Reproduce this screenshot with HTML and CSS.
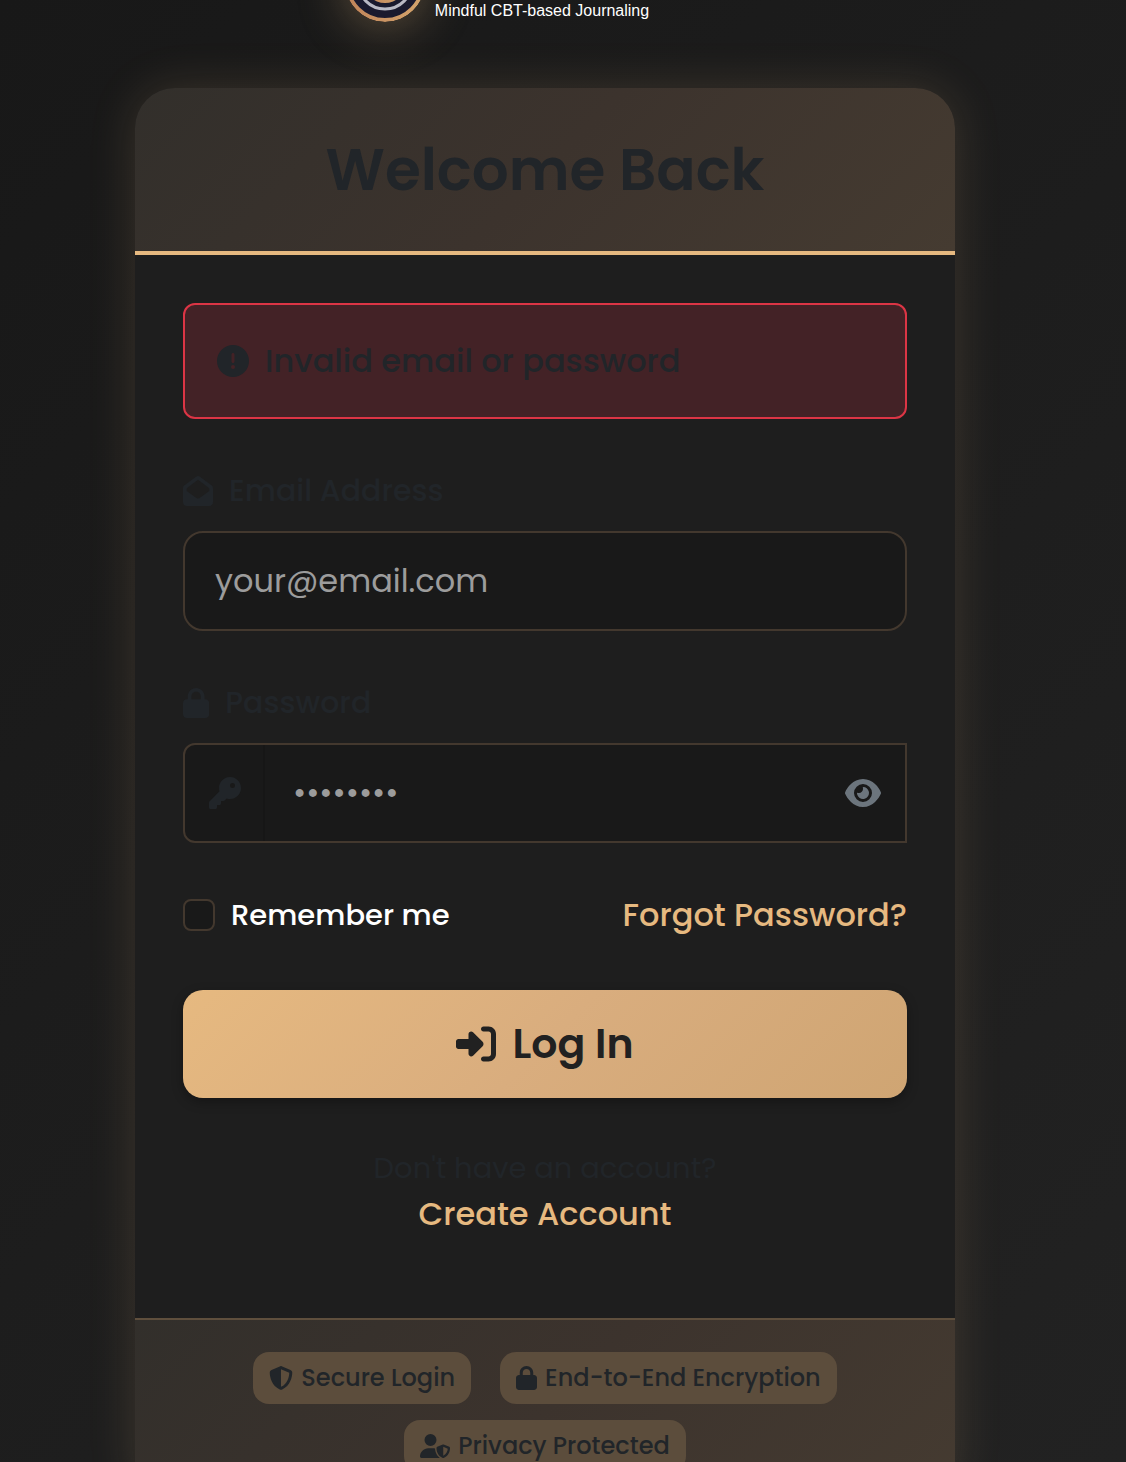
FILE: index.html
```html
<!DOCTYPE html>
<html lang="en">
<head>
<meta charset="utf-8">
<meta name="viewport" content="width=device-width, initial-scale=1">
<title>Log In</title>
<link rel="stylesheet" href="styles.css">
</head>
<body>
<div class="page">
  <header class="brand">
    <svg class="brand-mark" viewBox="0 0 80 80" aria-hidden="true">
      <defs>
        <linearGradient id="copper" x1="0" y1="0" x2="1" y2="0">
          <stop offset="0" stop-color="#c0845a"/>
          <stop offset="1" stop-color="#d4a46c"/>
        </linearGradient>
      </defs>
      <circle cx="40" cy="40" r="38" fill="#1a1a2e" stroke="url(#copper)" stroke-width="4"/>
      <circle cx="40" cy="40" r="27" fill="none" stroke="#b9b9c4" stroke-width="3"/>
      <circle cx="40" cy="40" r="21" fill="url(#copper)"/>
    </svg>
    <p class="brand-tagline">Mindful CBT-based Journaling</p>
  </header>

  <main class="card">
    <div class="card-header">
      <h1 class="card-title">Welcome Back</h1>
    </div>

    <form class="card-body">
      <div class="alert" role="alert">
        <svg class="icon icon-md" viewBox="0 0 512 512" aria-hidden="true"><path d="M256 512A256 256 0 1 0 256 0a256 256 0 1 0 0 512zm0-384c13.300 0 24 10.700 24 24V264c0 13.300-10.700 24-24 24s-24-10.700-24-24V152c0-13.300 10.700-24 24-24zM224 352a32 32 0 1 1 64 0 32 32 0 1 1 -64 0z"/></svg>
        <span>Invalid email or password</span>
      </div>

      <div class="field">
        <label class="field-label" for="email">
          <svg class="icon icon-label" viewBox="0 0 512 512" aria-hidden="true"><path d="M64 208.100L256 65.900 448 208.100v47.400L289.500 373c-9.700 7.200-21.400 11-33.500 11s-23.800-3.900-33.500-11L64 255.500V208.100zM256 0c-12.100 0-23.800 3.900-33.500 11L25.900 156.700C9.600 168.800 0 187.800 0 208.100V448c0 35.300 28.700 64 64 64H448c35.300 0 64-28.700 64-64V208.100c0-20.300-9.600-39.400-25.900-51.400L289.500 11C279.800 3.900 268.100 0 256 0z"/></svg>
          Email Address
        </label>
        <input class="text-input" id="email" type="email" placeholder="your@email.com">
      </div>

      <div class="field">
        <label class="field-label" for="password">
          <svg class="icon icon-label" viewBox="0 0 448 512" aria-hidden="true"><path d="M144 144v48H304V144c0-44.200-35.800-80-80-80s-80 35.800-80 80zM80 192V144C80 64.500 144.500 0 224 0s144 64.500 144 144v48h16c35.300 0 64 28.700 64 64V448c0 35.300-28.700 64-64 64H64c-35.300 0-64-28.700-64-64V256c0-35.300 28.700-64 64-64H80z"/></svg>
          Password
        </label>
        <div class="input-group">
          <span class="input-addon">
            <svg class="icon icon-md" viewBox="0 0 512 512" aria-hidden="true"><path d="M336 352c97.200 0 176-78.800 176-176S433.200 0 336 0S160 78.800 160 176c0 18.700 2.900 36.800 8.300 53.700L7 391c-4.500 4.500-7 10.600-7 17v80c0 13.300 10.700 24 24 24h80c13.300 0 24-10.700 24-24V448h40c13.300 0 24-10.700 24-24V384h40c6.400 0 12.500-2.500 17-7l33.300-33.300c16.900 5.400 35 8.300 53.700 8.300zM376 96a40 40 0 1 1 0 80 40 40 0 1 1 0-80z"/></svg>
          </span>
          <input class="group-input" id="password" type="password" placeholder="••••••••">
          <button class="reveal" type="button" aria-label="Show password">
            <svg class="icon icon-md" viewBox="0 0 576 512" aria-hidden="true"><path d="M288 32c-80.800 0-145.500 36.800-192.600 80.600C48.600 156 17.300 208 2.500 243.700c-3.300 7.900-3.300 16.700 0 24.600C17.300 304 48.600 356 95.400 399.400C142.500 443.200 207.200 480 288 480s145.500-36.800 192.600-80.600c46.800-43.500 78.100-95.400 93-131.100c3.300-7.900 3.300-16.700 0-24.600c-14.900-35.700-46.200-87.700-93-131.100C433.500 68.800 368.800 32 288 32zM144 256a144 144 0 1 1 288 0 144 144 0 1 1 -288 0zm144-64c0 35.300-28.700 64-64 64c-7.100 0-13.900-1.200-20.300-3.300c-5.500-1.800-11.900 1.600-11.700 7.400c.3 6.900 1.300 13.800 3.200 20.700c13.700 51.200 66.400 81.600 117.600 67.900s81.600-66.400 67.900-117.600c-11.100-41.500-47.800-69.400-88.600-71.100c-5.800-.2-9.200 6.100-7.400 11.700c2.100 6.400 3.300 13.200 3.300 20.300z"/></svg>
          </button>
        </div>
      </div>

      <div class="options">
        <label class="remember" for="remember">
          <input class="checkbox" id="remember" type="checkbox">
          Remember me
        </label>
        <a class="link" href="#">Forgot Password?</a>
      </div>

      <button class="submit" type="submit">
        <svg class="icon icon-lg" viewBox="0 0 512 512" aria-hidden="true"><path d="M217.900 105.900L340.700 228.700c7.200 7.200 11.300 17.100 11.300 27.300s-4.100 20.100-11.300 27.300L217.900 406.100c-6.400 6.400-15 9.900-24 9.900c-18.700 0-33.900-15.200-33.900-33.900l0-62.100L32 320c-17.700 0-32-14.300-32-32l0-64c0-17.700 14.300-32 32-32l128 0 0-62.100c0-18.700 15.200-33.900 33.900-33.900c9 0 17.600 3.600 24 9.900zM352 416l64 0c17.700 0 32-14.300 32-32l0-256c0-17.700-14.300-32-32-32l-64 0c-17.700 0-32-14.300-32-32s14.300-32 32-32l64 0c53 0 96 43 96 96l0 256c0 53-43 96-96 96l-64 0c-17.700 0-32-14.300-32-32s14.300-32 32-32z"/></svg>
        Log In
      </button>

      <div class="signup">
        <p class="signup-text">Don't have an account?</p>
        <a class="link" href="#">Create Account</a>
      </div>
    </form>

    <footer class="card-footer">
      <span class="badge">
        <svg class="icon icon-sm" viewBox="0 0 512 512" aria-hidden="true"><path d="M256 0c4.600 0 9.200 1 13.400 2.900L457.700 82.800c22 9.300 38.400 31 38.300 57.200c-.5 99.200-41.300 280.700-213.600 363.200c-16.700 8-36.100 8-52.800 0C57.300 420.700 16.500 239.200 16 140c-.1-26.200 16.300-47.900 38.300-57.200L242.700 2.900C246.800 1 251.400 0 256 0zm0 66.800V444.800C394 378 431.100 230.100 432 141.400L256 66.800z"/></svg>
        Secure Login
      </span>
      <span class="badge">
        <svg class="icon icon-sm" viewBox="0 0 448 512" aria-hidden="true"><path d="M144 144v48H304V144c0-44.200-35.800-80-80-80s-80 35.800-80 80zM80 192V144C80 64.500 144.500 0 224 0s144 64.500 144 144v48h16c35.300 0 64 28.700 64 64V448c0 35.300-28.700 64-64 64H64c-35.300 0-64-28.700-64-64V256c0-35.300 28.700-64 64-64H80z"/></svg>
        End-to-End Encryption
      </span>
      <span class="badge">
        <svg class="icon icon-sm" viewBox="0 0 640 512" aria-hidden="true"><path d="M224 256A128 128 0 1 0 224 0a128 128 0 1 0 0 256zm-45.700 48C79.800 304 0 383.800 0 482.300C0 498.700 13.300 512 29.700 512H418.300c1.800 0 3.500-.2 5.300-.5c-76.300-55.100-99.800-141-103.100-200.200c-16.100-4.800-33.100-7.300-50.700-7.300H178.300zm308.800-78.300l-120 48C358 277.400 352 286.200 352 296c0 63.300 25.900 168.800 134.800 214.200c5.900 2.500 12.600 2.500 18.500 0C614.100 464.800 640 359.300 640 296c0-9.800-6-18.600-15.100-22.300l-120-48c-5.700-2.300-12.100-2.300-17.800 0zM591.400 312c-3.900 50.700-27.200 116.700-95.400 149.700V273.800L591.400 312z"/></svg>
        Privacy Protected
      </span>
    </footer>
  </main>
</div>
</body>
</html>
```
FILE: styles.css
```css
:root {
  --gold: #e6b980;
  --ink: #212529;
  --field: #191919;
  --line: #43382e;
}

* {
  box-sizing: border-box;
}

body {
  margin: 0;
  background: #1a1a1a;
  color: var(--ink);
  font-family: Poppins, Inter, "Liberation Sans", sans-serif;
  font-size: 32px;
  font-weight: 500;
  line-height: 48px;
}

h1,
p {
  margin: 0;
}

.page {
  height: 100vh;
  overflow: hidden;
  padding-right: 36px;
  background: linear-gradient(135deg, #181818, #222222);
}

.brand {
  display: flex;
  justify-content: center;
  align-items: flex-end;
  gap: 10px;
  margin-top: -58px;
  margin-bottom: 66px;
  padding-right: 96px;
}

.brand-mark {
  width: 80px;
  height: 80px;
  border-radius: 50%;
  box-shadow: 0 4px 48px rgba(230, 185, 128, 0.35);
}

.brand-tagline {
  color: #ffffff;
  font-family: "Liberation Sans", Arial, sans-serif;
  font-size: 16px;
  font-weight: 400;
  line-height: 22px;
}

.card {
  max-width: 820px;
  margin: 0 auto;
  overflow: hidden;
  border-radius: 40px;
  background: #1e1e1e;
  box-shadow: 0 0 48px rgba(230, 185, 128, 0.16);
}

.card-header {
  padding: 48px;
  border-bottom: 4px solid var(--gold);
  background: linear-gradient(135deg, #322f2b, #3c332d 50%, #453b31);
  text-align: center;
}

.card-title {
  font-size: 58px;
  font-weight: 600;
  line-height: 67px;
}

.card-body {
  display: flex;
  flex-direction: column;
  gap: 48px;
  padding: 48px 48px 80px;
}

.icon {
  flex: none;
  display: block;
  width: auto;
  fill: currentColor;
}

.icon-sm {
  height: 24px;
}

.icon-label {
  height: 30px;
}

.icon-md {
  height: 32px;
}

.icon-lg {
  height: 40px;
}

.alert {
  display: flex;
  align-items: center;
  gap: 16px;
  padding: 32px;
  border: 2px solid #dc3545;
  border-radius: 12px;
  background: #432226;
}

.field {
  display: flex;
  flex-direction: column;
  gap: 16px;
}

.field-label {
  display: flex;
  align-items: center;
  gap: 16px;
  font-size: 30px;
}

.text-input,
.group-input {
  min-width: 0;
  color: #ffffff;
  font: inherit;
  font-weight: 400;
}

.text-input {
  width: 100%;
  height: 100px;
  padding: 0 30px;
  border: 2px solid var(--line);
  border-radius: 20px;
  background: var(--field);
}

::placeholder {
  color: #9c9c9c;
  opacity: 1;
}

.input-group {
  display: flex;
  height: 100px;
  border: 2px solid var(--line);
  border-radius: 12px 0 0 12px;
  background: var(--field);
}

.input-addon {
  display: flex;
  align-items: center;
  padding: 0 22px 0 24px;
  border-right: 2px solid #161616;
}

.group-input {
  flex: 1;
  padding: 0 28px;
  border: 0;
  background: transparent;
}

.reveal {
  padding: 0 24px;
  border: 0;
  background: transparent;
  color: #6c757d;
}

.options {
  display: flex;
  justify-content: space-between;
  align-items: center;
  padding-bottom: 3px;
}

.remember {
  display: flex;
  align-items: center;
  gap: 16px;
  color: #ffffff;
  font-size: 29px;
}

.checkbox {
  appearance: none;
  width: 32px;
  height: 32px;
  margin: 0;
  border: 2px solid var(--line);
  border-radius: 8px;
  background: var(--field);
}

.link {
  color: var(--gold);
  text-decoration: none;
}

.submit {
  display: flex;
  justify-content: center;
  align-items: center;
  gap: 16px;
  height: 108px;
  border: 0;
  border-radius: 20px;
  background: linear-gradient(135deg, #e6b980, #d9ad7e 50%, #cfa573);
  box-shadow: 0 4px 12px rgba(0, 0, 0, 0.3);
  color: #212121;
  font: inherit;
  font-size: 41px;
  font-weight: 600;
}

.signup {
  text-align: center;
}

.signup-text {
  font-size: 29px;
  font-weight: 400;
  line-height: 44px;
}

.card-footer {
  display: flex;
  flex-wrap: wrap;
  justify-content: center;
  gap: 16px 29px;
  padding: 32px 48px;
  border-top: 2px solid #5f4f3d;
  background: linear-gradient(135deg, #322f2b, #3c332d 50%, #453b31);
}

.badge {
  display: flex;
  align-items: center;
  gap: 8px;
  height: 52px;
  padding: 0 16px;
  border-radius: 16px;
  background: #5c4d3c;
  font-size: 24px;
}
```
